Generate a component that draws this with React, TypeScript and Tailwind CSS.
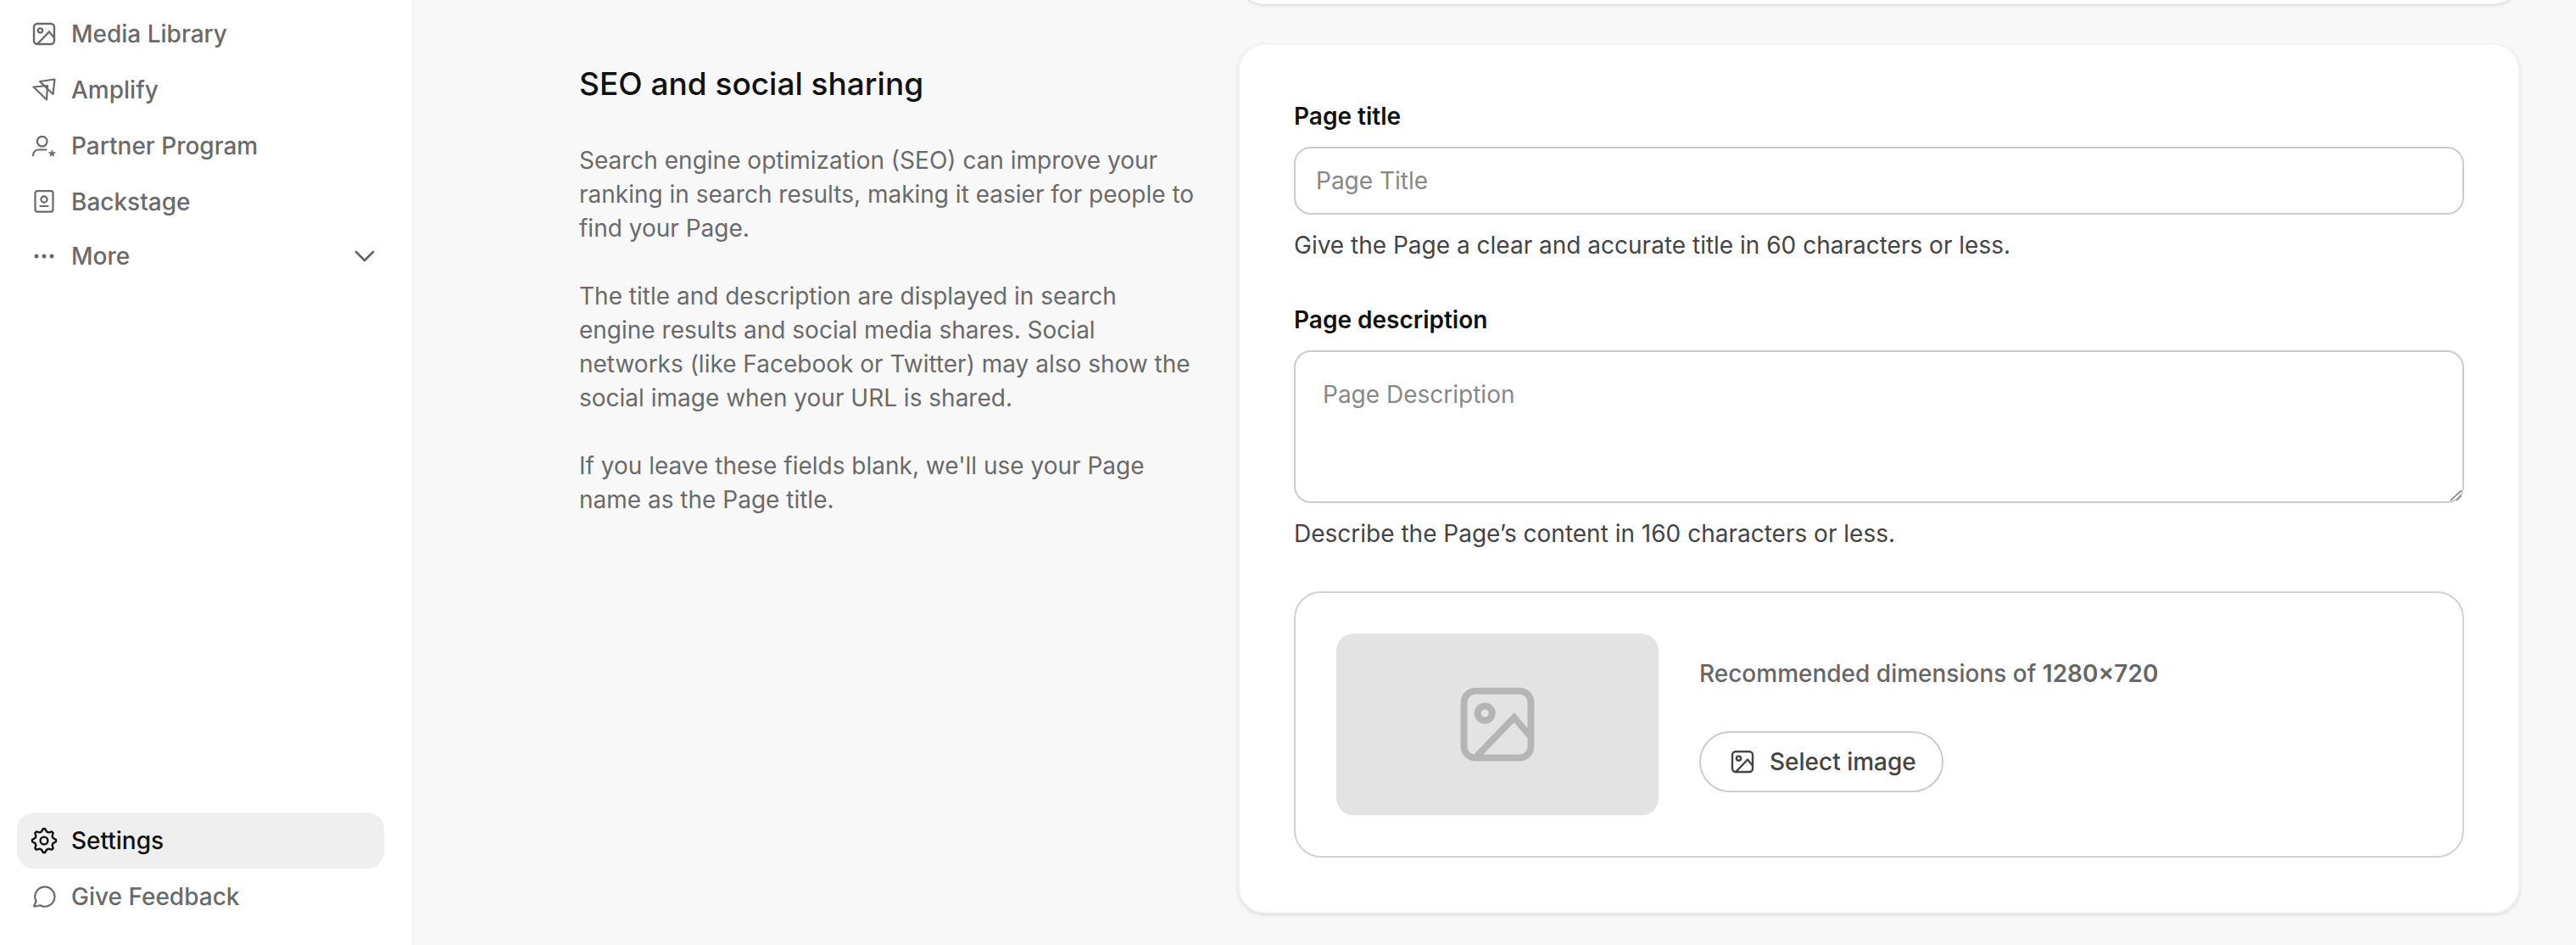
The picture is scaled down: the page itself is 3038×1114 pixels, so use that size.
import { ChevronDown } from "lucide-react";
import type { ReactNode } from "react";

function ImageIcon({ className }: { className: string }) {
  return (
    <svg viewBox="0 0 28 28" fill="none" stroke="currentColor" strokeWidth="2.4" className={className}>
      <rect x="2" y="2" width="24" height="24" rx="4" />
      <circle cx="9.5" cy="10" r="2.6" />
      <path d="M6 26 L20 11.5 L26 18.5" />
    </svg>
  );
}

function AmplifyIcon() {
  return (
    <svg viewBox="0 0 28 28" fill="none" stroke="currentColor" strokeWidth="2.2" strokeLinejoin="round" className="w-7 h-7 shrink-0">
      <path d="M9 4 L26.5 1.5 L24.5 19 Z" />
      <path d="M1.5 10.5 L18 9 L17 25.5 Z" />
    </svg>
  );
}

function PartnerIcon() {
  return (
    <svg viewBox="0 0 28 28" fill="none" stroke="currentColor" strokeWidth="2.2" strokeLinecap="round" className="w-7 h-7 shrink-0 overflow-visible">
      <circle cx="11.7" cy="8.7" r="5.9" />
      <path d="M1 25.5 C1 21 4 18.5 8 18.5 L16.5 18.5" />
      <polygon
        points="23.4,18 24.6,21.3 28.2,21.5 25.4,23.7 26.3,27 23.4,25.1 20.5,27 21.4,23.7 18.6,21.5 22.2,21.3"
        fill="currentColor"
        stroke="none"
      />
    </svg>
  );
}

function BackstageIcon() {
  return (
    <svg viewBox="0 0 28 28" fill="none" stroke="currentColor" strokeWidth="2.2" strokeLinecap="round" className="w-7 h-7 shrink-0">
      <rect x="3.5" y="1.2" width="21" height="24.4" rx="2.5" />
      <circle cx="14" cy="11" r="3.6" />
      <path d="M9.5 19 L18.5 19" />
    </svg>
  );
}

function DotsIcon() {
  return (
    <svg viewBox="0 0 28 28" fill="currentColor" className="w-7 h-7 shrink-0">
      <circle cx="5" cy="14" r="2.5" />
      <circle cx="14" cy="14" r="2.5" />
      <circle cx="23" cy="14" r="2.5" />
    </svg>
  );
}

const gearPoints = Array.from({ length: 8 })
  .flatMap((_, i) => {
    const a = (i * Math.PI) / 4;
    return [-0.2, -0.1, 0.1, 0.2].map((o, j) => {
      const r = j === 1 || j === 2 ? 14 : 11;
      const t = a + o * (j === 1 || j === 2 ? 0.85 : 1.4);
      return `${(16 + r * Math.sin(t)).toFixed(2)},${(16 - r * Math.cos(t)).toFixed(2)}`;
    });
  })
  .join(" ");

function GearIcon() {
  return (
    <svg viewBox="0 0 32 32" fill="none" stroke="currentColor" strokeWidth="2.4" strokeLinejoin="round" className="w-8 h-8 shrink-0">
      <polygon points={gearPoints} />
      <circle cx="16" cy="16" r="4.4" />
    </svg>
  );
}

function ChatIcon() {
  return (
    <svg viewBox="0 0 28 28" fill="none" stroke="currentColor" strokeWidth="2.2" strokeLinejoin="round" className="w-7 h-7 shrink-0">
      <path d="M2 25.5 L4.6 19.5 A11.6 11.6 0 1 1 9.2 24.2 C6.5 25 4.5 25.5 2 25.5 Z" />
    </svg>
  );
}

function NavItem({ icon, label, active, right }: { icon: ReactNode; label: string; active?: boolean; right?: ReactNode }) {
  return (
    <div
      className={`h-[66px] ml-5 mr-[33px] pl-[18px] pr-[3px] flex items-center gap-[18px] rounded-[20px] text-[28px] font-medium ${
        active ? "bg-[#efefef] text-[#111111]" : "text-[#6a6a6a]"
      }`}
    >
      <span className="w-7 flex justify-center shrink-0">{icon}</span>
      <span className="flex-1">{label}</span>
      {right}
    </div>
  );
}

function Field({ label, hint, children }: { label: string; hint: string; children: ReactNode }) {
  return (
    <div>
      <div className="text-[28px] leading-10 font-semibold text-[#111111] mb-4">{label}</div>
      {children}
      <p className="text-[28px] leading-10 text-[#444444] mt-4">{hint}</p>
    </div>
  );
}

export default function App() {
  return (
    <div
      className="h-[1114px] flex overflow-hidden bg-[#f8f8f8]"
      style={{ fontFamily: "Inter, sans-serif" }}
    >
      <aside className="w-[488px] shrink-0 bg-white border-r-2 border-[#f2f2f2] pt-[7px] pb-6 flex flex-col">
        <NavItem icon={<ImageIcon className="w-7 h-7 shrink-0" />} label="Media Library" />
        <NavItem icon={<AmplifyIcon />} label="Amplify" />
        <NavItem icon={<PartnerIcon />} label="Partner Program" />
        <NavItem icon={<BackstageIcon />} label="Backstage" />
        <div className="-mt-0.5">
          <NavItem icon={<DotsIcon />} label="More" right={<ChevronDown className="w-10 h-10 text-[#666666]" strokeWidth={1.6} />} />
        </div>
        <div className="mt-auto">
          <NavItem icon={<GearIcon />} label="Settings" active />
          <NavItem icon={<ChatIcon />} label="Give Feedback" />
        </div>
      </aside>

      <main className="flex-1 pl-[195px] pr-[66px]">
        <div className="h-[100px] -mt-[95px] mb-[46px] ml-[777px] bg-white rounded-[32px] shadow-[0_2px_4px_rgba(0,0,0,0.12)]" />
        <div className="flex gap-12">
          <div className="w-[729px] shrink-0 pt-6">
            <h2 className="text-[37px] leading-[48px] font-[450] text-[#111111]">SEO and social sharing</h2>
            <div className="mt-[46px] flex flex-col gap-10 text-[28px] leading-10 text-[#6a6a6a]">
              <p>Search engine optimization (SEO) can improve your ranking in search results, making it easier for people to find your Page.</p>
              <p>The title and description are displayed in search engine results and social media shares. Social networks (like Facebook or Twitter) may also show the social image when your URL is shared.</p>
              <p>If you leave these fields blank, we'll use your Page name as the Page title.</p>
            </div>
          </div>

          <section className="flex-1 bg-white rounded-[32px] border-2 border-[#f3f3f3] p-16 flex flex-col gap-12 shadow-[0_2px_4px_rgba(0,0,0,0.12)]">
            <Field label="Page title" hint="Give the Page a clear and accurate title in 60 characters or less.">
              <input
                placeholder="Page Title"
                className="block w-full h-20 px-6 rounded-[20px] border-2 border-[#cccccc] text-[28px] placeholder:text-[#888888] outline-none"
              />
            </Field>
            <Field label="Page description" hint="Describe the Page’s content in 160 characters or less.">
              <div className="relative">
                <textarea
                  placeholder="Page Description"
                  className="block w-full h-[180px] px-8 py-[30px] rounded-[20px] border-2 border-[#cccccc] text-[28px] leading-10 placeholder:text-[#888888] outline-none resize-none"
                />
                <svg viewBox="0 0 14 14" stroke="#777777" strokeWidth="1.5" className="absolute right-[3px] bottom-[2px] w-[14px] h-[14px]">
                  <path d="M1 13 L14 1 M8 13 L14 7" />
                </svg>
              </div>
            </Field>
            <div className="rounded-[32px] border-2 border-[#d2d2d2] p-12 flex items-center gap-12">
              <div className="w-[380px] h-[214px] rounded-[20px] bg-[#e3e3e3] flex items-center justify-center shrink-0">
                <ImageIcon className="w-[92px] h-[92px] text-[#b5b5b5]" />
              </div>
              <div className="flex flex-col items-start gap-12">
                <p className="text-[28px] leading-10 font-medium text-[#666666]">
                  Recommended dimensions of <span className="font-semibold">1280×720</span>
                </p>
                <button className="h-[72px] w-[288px] pl-[35px] rounded-full border-2 border-[#cccccc] flex items-center gap-[18px] text-[28px] font-medium whitespace-nowrap text-[#444444]">
                  <ImageIcon className="w-7 h-7 shrink-0" />
                  Select image
                </button>
              </div>
            </div>
          </section>
        </div>
      </main>
    </div>
  );
}
